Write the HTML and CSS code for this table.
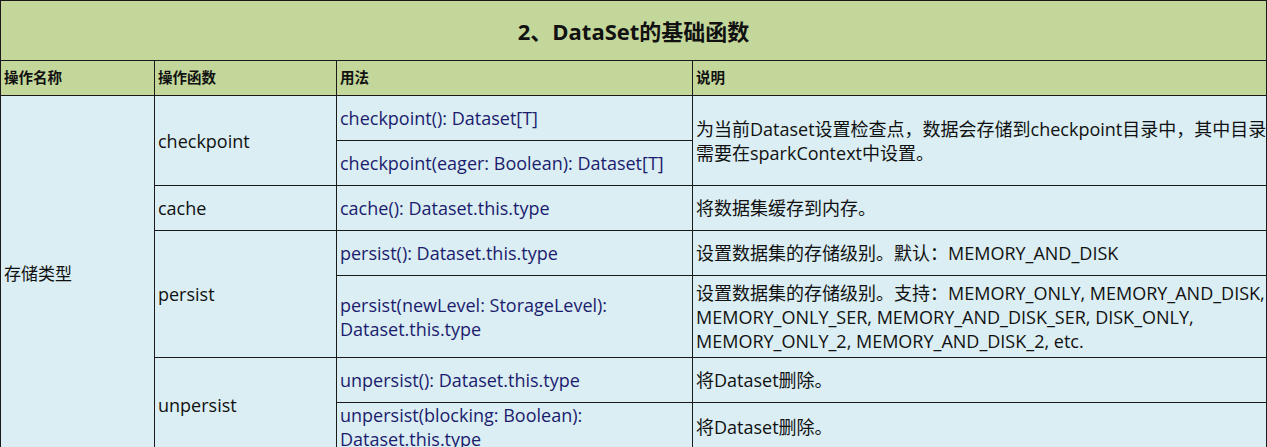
FILE: index.html
```html
<!DOCTYPE html>
<html lang="zh-CN">
<head>
<meta charset="utf-8">
<title>DataSet的基础函数</title>
<link rel="stylesheet" href="styles.css">
</head>
<body>
<div class="sheet">
  <table class="grid">
    <colgroup>
      <col class="c1"><col class="c2"><col class="c3"><col class="c4">
    </colgroup>
    <tr class="r-title">
      <td class="title" colspan="4">2、DataSet的基础函数</td>
    </tr>
    <tr class="r-head">
      <td class="head">操作名称</td>
      <td class="head">操作函数</td>
      <td class="head">用法</td>
      <td class="head">说明</td>
    </tr>
    <tr class="r45">
      <td class="cell cat" rowspan="8">存储类型</td>
      <td class="cell" rowspan="2">checkpoint</td>
      <td class="cell usage">checkpoint(): Dataset[T]</td>
      <td class="cell desc" rowspan="2">为当前Dataset设置检查点，数据会存储到checkpoint目录中，其中目录<br>需要在sparkContext中设置。</td>
    </tr>
    <tr class="r45">
      <td class="cell usage">checkpoint(eager: Boolean): Dataset[T]</td>
    </tr>
    <tr class="r45">
      <td class="cell">cache</td>
      <td class="cell usage">cache(): Dataset.this.type</td>
      <td class="cell desc">将数据集缓存到内存。</td>
    </tr>
    <tr class="r45">
      <td class="cell" rowspan="2">persist</td>
      <td class="cell usage">persist(): Dataset.this.type</td>
      <td class="cell desc">设置数据集的存储级别。默认：MEMORY_AND_DISK</td>
    </tr>
    <tr class="r82">
      <td class="cell usage">persist(newLevel: StorageLevel):<br>Dataset.this.type</td>
      <td class="cell desc">设置数据集的存储级别。支持：MEMORY_ONLY, MEMORY_AND_DISK,<br>MEMORY_ONLY_SER, MEMORY_AND_DISK_SER, DISK_ONLY,<br>MEMORY_ONLY_2, MEMORY_AND_DISK_2, etc.</td>
    </tr>
    <tr class="r45">
      <td class="cell" rowspan="2">unpersist</td>
      <td class="cell usage">unpersist(): Dataset.this.type</td>
      <td class="cell desc">将Dataset删除。</td>
    </tr>
    <tr class="r45">
      <td class="cell usage">unpersist(blocking: Boolean):<br>Dataset.this.type</td>
      <td class="cell desc">将Dataset删除。</td>
    </tr>
  </table>
</div>
</body>
</html>
```
FILE: styles.css
```css
html, body {
  margin: 0;
  padding: 0;
  background: #ffffff;
}
.sheet {
  width: 1267px;
  height: 447px;
  overflow: hidden;
}
.grid {
  border-collapse: collapse;
  table-layout: fixed;
  width: 1266px;
  font-family: "Open Sans", "Noto Sans CJK SC", sans-serif;
  font-size: 18px;
  line-height: 24px;
  color: #111111;
}
.c1 { width: 154px; }
.c2 { width: 182px; }
.c3 { width: 356px; }
.c4 { width: 574px; }
.grid td {
  border: 1px solid #1a1a1a;
  padding: 0 3px;
  vertical-align: middle;
  white-space: nowrap;
  overflow: hidden;
}
.r-title { height: 60px; }
.r-head { height: 35px; }
.r45 { height: 45px; }
.r82 { height: 82px; }
.title {
  background: #c4d79b;
  text-align: center;
  font-weight: 700;
  font-size: 22px;
  padding-top: 3px;
}
.head {
  background: #c4d79b;
  font-weight: 700;
  font-size: 14.5px;
  padding-top: 2px;
}
.cell {
  background: #daeef3;
}
.cat {
  font-size: 17px;
}
.usage {
  color: #1c1c6e;
}
.desc {
  padding-left: 2px;
}
```
